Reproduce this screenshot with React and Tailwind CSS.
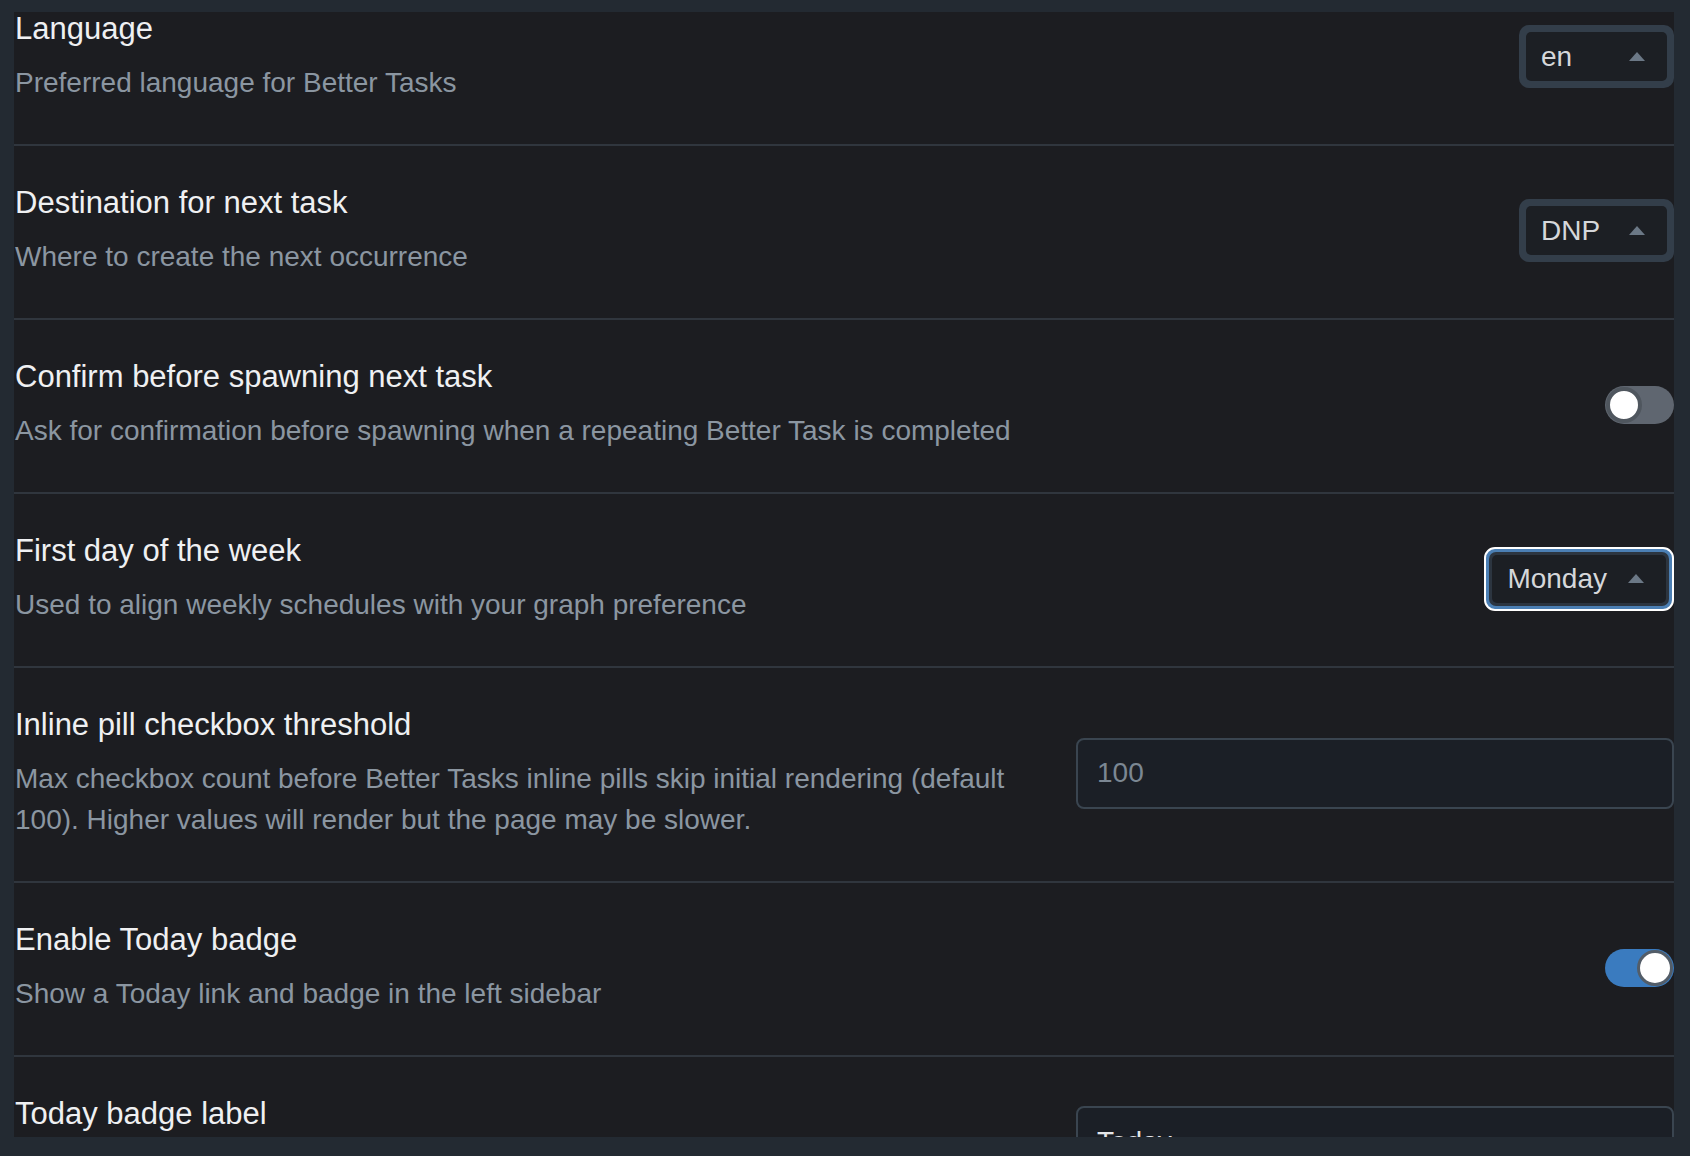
import { useState } from 'react';

const ROWS = [
  { key: 'lang', title: 'Language', desc: 'Preferred language for Better Tasks', type: 'select', value: 'en' },
  { key: 'dest', title: 'Destination for next task', desc: 'Where to create the next occurrence', type: 'select', value: 'DNP' },
  { key: 'confirm', title: 'Confirm before spawning next task', desc: 'Ask for confirmation before spawning when a repeating Better Task is completed', type: 'toggle', value: false },
  { key: 'week', title: 'First day of the week', desc: 'Used to align weekly schedules with your graph preference', type: 'select', value: 'Monday', focused: true },
  { key: 'pill', title: 'Inline pill checkbox threshold', desc: 'Max checkbox count before Better Tasks inline pills skip initial rendering (default 100). Higher values will render but the page may be slower.', type: 'input', placeholder: '100' },
  { key: 'today', title: 'Enable Today badge', desc: 'Show a Today link and badge in the left sidebar', type: 'toggle', value: true },
  { key: 'label', title: 'Today badge label', desc: 'Text shown next to the Today link', type: 'input', value: 'Today' },
];

const Caret = () => (
  <svg width="16" height="9" viewBox="0 0 16 9" className="shrink-0">
    <polygon points="8,0 16,9 0,9" fill="#6b7886" />
  </svg>
);

const Select = ({ value, focused }) => {
  const inner = (
    <div className="flex flex-1 items-center justify-between gap-[21px] rounded-[5px] bg-[#1c1f24] pl-[15px] pr-[22px]">
      <span className="text-[28px] leading-none text-[#d5d7da]">{value}</span>
      <Caret />
    </div>
  );
  if (focused) {
    return (
      <div className="flex h-[64px] rounded-[11px] border-2 border-white bg-[#4b7fb4] p-[3px]">
        <div className="flex flex-1 rounded-[7px] bg-[#2c3540] p-[3px]">{inner}</div>
      </div>
    );
  }
  return (
    <div className="flex h-[63px] min-w-[155px] rounded-[10px] bg-[#333e4a] p-[7px]">{inner}</div>
  );
};

const Toggle = ({ on, onClick }) => (
  <button
    onClick={onClick}
    className={`flex h-[38px] w-[69px] shrink-0 items-center rounded-full px-[1px] ${on ? 'justify-end bg-[#3a7bbf]' : 'justify-start bg-[#5f6670]'}`}
  >
    <span className={`block h-[36px] w-[36px] rounded-full bg-white ${on ? 'border-[3px] border-[#535d68]' : 'border-[4px] border-[#4f565e]'}`} />
  </button>
);

const TextInput = ({ value, placeholder }) => (
  <div className="flex h-[71px] w-[598px] shrink-0 items-center rounded-[8px] border-2 border-[#3a4550] bg-[#1b1f26] px-[19px]">
    {value ? (
      <span className="text-[28px] leading-none text-[#e4e6e9]">{value}</span>
    ) : (
      <span className="text-[28px] leading-none text-[#7b8793]">{placeholder}</span>
    )}
  </div>
);

export default function App() {
  const [toggles, setToggles] = useState({ confirm: false, today: true });

  return (
    <div className="h-[1156px] w-full overflow-hidden bg-[#232a32] pb-[19px] pl-[14px] pr-[16px] pt-[12px] font-['Liberation_Sans',Arial,sans-serif]">
      <div className="h-full overflow-hidden bg-[#1c1d21]">
        {/* list is scrolled a bit, first row is cut at the top */}
        <div className="-mt-[40px]">
          {ROWS.map(row => (
            <div key={row.key} className="flex items-center justify-between gap-[32px] border-b-2 border-[#30363e] pb-[41px] pt-[38px]">
              <div className="min-w-0 flex-1 pl-[1px]">
                <h3 className="text-[31px] leading-[37px] text-[#eff0f2]">{row.title}</h3>
                <p className="mt-[15px] text-[28px] leading-[41px] text-[#8b96a1]">{row.desc}</p>
              </div>
              {row.type === 'select' && <Select value={row.value} focused={row.focused} />}
              {row.type === 'toggle' && (
                <Toggle on={toggles[row.key]} onClick={() => setToggles(t => ({ ...t, [row.key]: !t[row.key] }))} />
              )}
              {row.type === 'input' && <TextInput value={row.value} placeholder={row.placeholder} />}
            </div>
          ))}
        </div>
      </div>
    </div>
  );
}
